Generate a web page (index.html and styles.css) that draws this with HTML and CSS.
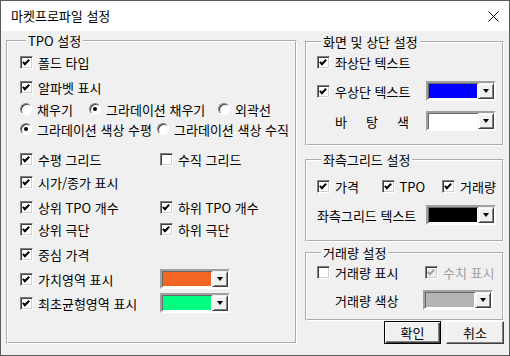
FILE: index.html
```html
<!DOCTYPE html>
<html lang="ko">
<head>
    <meta charset="UTF-8">
    <meta name="viewport" content="width=device-width, initial-scale=1.0">
    <title>마켓프로파일 설정</title>
    <link rel="stylesheet" href="styles.css">
</head>
<body>
    <div class="dialog">
        <div class="titlebar">
            <span class="title">마켓프로파일 설정</span>
            <svg class="close" width="11" height="11" viewBox="0 0 11 11">
                <path d="M0.5 0.5 L10.5 10.5 M10.5 0.5 L0.5 10.5" stroke="#000" stroke-width="1" fill="none"/>
            </svg>
        </div>

        <div class="content">
            <fieldset class="group tpo">
                <legend>TPO 설정</legend>
                <div class="row"><label class="item"><span class="cb on"></span>폴드 타입</label></div>
                <div class="row gap-5"><label class="item"><span class="cb on"></span>알파벳 표시</label></div>
                <div class="row gap-2">
                    <label class="item w-69"><span class="rb"></span>채우기</label>
                    <label class="item w-129"><span class="rb on"></span>그라데이션 채우기</label>
                    <label class="item"><span class="rb"></span>외곽선</label>
                </div>
                <div class="row">
                    <label class="item w-137"><span class="rb on"></span>그라데이션 색상 수평</label>
                    <label class="item"><span class="rb"></span>그라데이션 색상 수직</label>
                </div>
                <div class="row gap-10">
                    <label class="item col"><span class="cb on"></span>수평 그리드</label>
                    <label class="item"><span class="cb"></span>수직 그리드</label>
                </div>
                <div class="row gap-3"><label class="item"><span class="cb on"></span>시가/종가 표시</label></div>
                <div class="row gap-5">
                    <label class="item col"><span class="cb on"></span>상위 TPO 개수</label>
                    <label class="item"><span class="cb on"></span>하위 TPO 개수</label>
                </div>
                <div class="row gap-2">
                    <label class="item col"><span class="cb on"></span>상위 극단</label>
                    <label class="item"><span class="cb on"></span>하위 극단</label>
                </div>
                <div class="row gap-5"><label class="item"><span class="cb on"></span>중심 가격</label></div>
                <div class="row gap-5">
                    <label class="item col"><span class="cb on"></span>가치영역 표시</label>
                    <div class="combo"><span class="swatch orange"></span><span class="drop"></span></div>
                </div>
                <div class="row gap-4">
                    <label class="item col"><span class="cb on"></span>최초균형영역 표시</label>
                    <div class="combo"><span class="swatch green"></span><span class="drop"></span></div>
                </div>
            </fieldset>

            <div class="side">
                <fieldset class="group screen">
                    <legend>화면 및 상단 설정</legend>
                    <div class="row"><label class="item"><span class="cb on"></span>좌상단 텍스트</label></div>
                    <div class="row split gap-9">
                        <label class="item"><span class="cb on"></span>우상단 텍스트</label>
                        <div class="combo"><span class="swatch blue"></span><span class="drop"></span></div>
                    </div>
                    <div class="row split gap-10">
                        <span class="spaced"><span>바</span><span>탕</span><span>색</span></span>
                        <div class="combo"><span class="swatch white"></span><span class="drop"></span></div>
                    </div>
                </fieldset>

                <fieldset class="group grid">
                    <legend>좌측그리드 설정</legend>
                    <div class="row">
                        <label class="item w-65"><span class="cb on"></span>가격</label>
                        <label class="item w-61"><span class="cb on"></span>TPO</label>
                        <label class="item"><span class="cb on"></span>거래량</label>
                    </div>
                    <div class="row split gap-9">
                        <span>좌측그리드 텍스트</span>
                        <div class="combo"><span class="swatch black"></span><span class="drop"></span></div>
                    </div>
                </fieldset>

                <fieldset class="group volume">
                    <legend>거래량 설정</legend>
                    <div class="row">
                        <label class="item w-108"><span class="cb"></span>거래량 표시</label>
                        <label class="item disabled"><span class="cb on off"></span>수치 표시</label>
                    </div>
                    <div class="row split gap-8">
                        <span class="indent">거래량 색상</span>
                        <div class="combo shift"><span class="swatch gray"></span><span class="drop"></span></div>
                    </div>
                </fieldset>

                <div class="buttons">
                    <button class="btn default">확인</button>
                    <button class="btn">취소</button>
                </div>
            </div>
        </div>
    </div>
</body>
</html>
```

FILE: styles.css
```css
body {
    margin: 0;
    font-family: "Noto Sans CJK KR", "Noto Sans", sans-serif;
    font-size: 13px;
    color: #000;
}
.dialog {
    width: 510px;
    height: 356px;
    box-sizing: border-box;
    border: 1px solid #5b5b5b;
    background: #f0f0f0;
    display: flex;
    flex-direction: column;
}
.titlebar {
    height: 30px;
    flex-shrink: 0;
    background: #fff;
    display: flex;
    align-items: center;
    justify-content: space-between;
    padding: 0 10px;
}
.title {
    line-height: 14px;
}
.content {
    display: flex;
    gap: 8px;
    padding: 0 5px;
}

/* group boxes, etched like a dialog frame */
.group {
    margin: 0;
    border: 2px groove #fff;
    min-inline-size: 0;
    box-sizing: border-box;
}
.group legend {
    padding: 0 2px;
    margin-left: 4px;
    line-height: 14px;
}
.tpo {
    width: 291px;
    margin-top: 3px;
    padding: 4px 0 8px 12px;
}
.tpo legend {
    margin-left: 6px;
}
.side {
    width: 199px;
    display: flex;
    flex-direction: column;
}
.screen {
    margin-top: 4px;
    padding: 3px 6px 13px 10px;
}
.grid {
    margin-top: 7px;
    padding: 9px 6px 15px 10px;
}
.volume {
    margin-top: 4px;
    padding: 2px 6px 9px 10px;
}

/* rows */
.row {
    display: flex;
    align-items: center;
    height: 20px;
    white-space: nowrap;
}
.row.split {
    justify-content: space-between;
}
.gap-2 { margin-top: 2px; }
.gap-3 { margin-top: 3px; }
.gap-4 { margin-top: 4px; }
.gap-5 { margin-top: 5px; }
.gap-8 { margin-top: 8px; }
.gap-9 { margin-top: 9px; }
.gap-10 { margin-top: 10px; }
.item {
    display: flex;
    align-items: center;
    gap: 5px;
}
.item.col { width: 140px; }
.w-61 { width: 61px; }
.w-65 { width: 65px; }
.w-69 { width: 69px; }
.w-108 { width: 108px; }
.w-129 { width: 129px; }
.w-137 { width: 137px; }
.item.disabled {
    color: #a0a0a0;
}
.indent {
    margin-left: 18px;
}
.spaced {
    display: flex;
    justify-content: space-between;
    width: 74px;
    margin-left: 18px;
}

/* checkbox */
.cb {
    position: relative;
    width: 13px;
    height: 13px;
    flex-shrink: 0;
    box-sizing: border-box;
    border: 1px solid;
    border-color: #808080 #fff #fff #808080;
    box-shadow: inset 1px 1px 0 #404040, inset -1px -1px 0 #d4d0c8;
    background: #fff;
}
.cb.on::after {
    content: "";
    position: absolute;
    left: 3px;
    top: 1px;
    width: 2px;
    height: 5px;
    border: solid #000;
    border-width: 0 2px 2px 0;
    transform: rotate(45deg);
}
.cb.off {
    background: #f0f0f0;
}
.cb.off::after {
    border-color: #a0a0a0;
}

/* radio */
.rb {
    position: relative;
    width: 12px;
    height: 12px;
    flex-shrink: 0;
    box-sizing: border-box;
    border: 1px solid;
    border-color: #808080 #fff #fff #808080;
    border-radius: 50%;
    box-shadow: inset 1px 1px 0 #404040;
    background: #fff;
}
.rb.on::after {
    content: "";
    position: absolute;
    left: 3px;
    top: 3px;
    width: 4px;
    height: 4px;
    border-radius: 50%;
    background: #000;
}

/* colour combo */
.combo {
    display: flex;
    width: 70px;
    height: 20px;
    box-sizing: border-box;
    border: 2px solid;
    border-color: #a0a0a0 #fff #fff #a0a0a0;
    box-shadow: inset 1px 1px 0 #696969;
    background: #fff;
}
.combo.shift {
    margin-right: 3px;
}
.swatch {
    flex: 1;
    margin: 1px;
}
.orange { background: #f26522; }
.green { background: #00ff80; }
.blue { background: #0000ff; }
.white { background: #fff; }
.black { background: #000; }
.gray { background: #b4b4b4; }
.drop {
    width: 16px;
    box-sizing: border-box;
    border: 1px solid;
    border-color: #f0f0f0 #404040 #404040 #f0f0f0;
    box-shadow: inset 1px 1px 0 #fff, inset -1px -1px 0 #808080;
    background: #f0f0f0;
    display: flex;
    align-items: center;
    justify-content: center;
}
.drop::after {
    content: "";
    border-top: 4px solid #000;
    border-left: 3px solid transparent;
    border-right: 3px solid transparent;
}

/* buttons */
.buttons {
    display: flex;
    justify-content: flex-end;
    gap: 5px;
}
.btn {
    width: 58px;
    height: 23px;
    padding: 0;
    font: inherit;
    color: #000;
    background: #f0f0f0;
    border: 1px solid;
    border-color: #fff #404040 #404040 #fff;
    box-shadow: inset -1px -1px 0 #808080;
}
.btn.default {
    width: 57px;
    border-color: #000;
    box-shadow: inset 1px 1px 0 #fff, inset -1px -1px 0 #404040, inset -2px -2px 0 #808080;
}
```
